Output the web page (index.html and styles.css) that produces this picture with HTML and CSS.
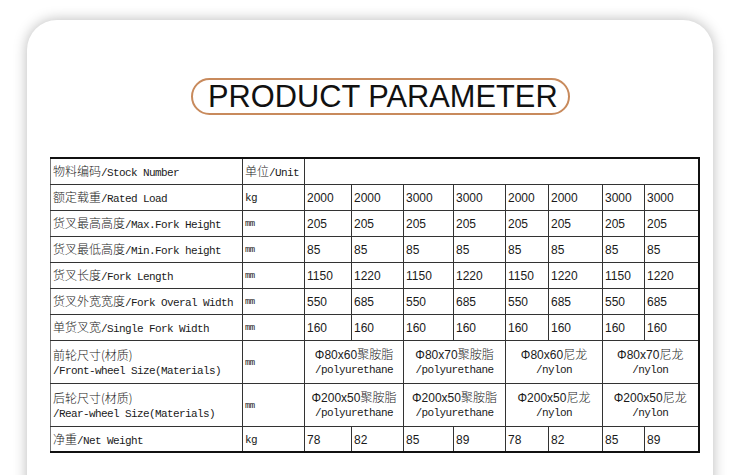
FILE: index.html
```html
<!DOCTYPE html>
<html lang="zh">
<head>
<meta charset="utf-8">
<title>Product Parameter</title>
<link rel="stylesheet" href="styles.css">
</head>
<body>
<div class="card">
  <div class="title-row">
    <h1 class="pill">PRODUCT PARAMETER</h1>
  </div>
  <table class="spec">
    <colgroup>
      <col class="c-label"><col class="c-unit">
      <col class="c-a"><col class="c-b"><col class="c-c"><col class="c-d">
      <col class="c-e"><col class="c-f"><col class="c-g"><col class="c-h">
    </colgroup>
    <tr class="r">
      <td class="lb"><span class="zh">物料编码</span>/Stock Number</td>
      <td class="lb"><span class="zh">单位</span>/Unit</td>
      <td colspan="8"></td>
    </tr>
    <tr class="r">
      <td class="lb"><span class="zh">额定载重</span>/Rated Load</td>
      <td class="u">kg</td>
      <td class="n">2000</td><td class="n">2000</td><td class="n">3000</td><td class="n">3000</td>
      <td class="n">2000</td><td class="n">2000</td><td class="n">3000</td><td class="n">3000</td>
    </tr>
    <tr class="r">
      <td class="lb"><span class="zh">货叉最高高度</span>/Max.Fork Height</td>
      <td class="u mm">mm</td>
      <td class="n">205</td><td class="n">205</td><td class="n">205</td><td class="n">205</td>
      <td class="n">205</td><td class="n">205</td><td class="n">205</td><td class="n">205</td>
    </tr>
    <tr class="r">
      <td class="lb"><span class="zh">货叉最低高度</span>/Min.Fork height</td>
      <td class="u mm">mm</td>
      <td class="n">85</td><td class="n">85</td><td class="n">85</td><td class="n">85</td>
      <td class="n">85</td><td class="n">85</td><td class="n">85</td><td class="n">85</td>
    </tr>
    <tr class="r">
      <td class="lb"><span class="zh">货叉长度</span>/Fork Length</td>
      <td class="u mm">mm</td>
      <td class="n">1150</td><td class="n">1220</td><td class="n">1150</td><td class="n">1220</td>
      <td class="n">1150</td><td class="n">1220</td><td class="n">1150</td><td class="n">1220</td>
    </tr>
    <tr class="r">
      <td class="lb"><span class="zh">货叉外宽宽度</span>/Fork Overal Width</td>
      <td class="u mm">mm</td>
      <td class="n">550</td><td class="n">685</td><td class="n">550</td><td class="n">685</td>
      <td class="n">550</td><td class="n">685</td><td class="n">550</td><td class="n">685</td>
    </tr>
    <tr class="r">
      <td class="lb"><span class="zh">单货叉宽</span>/Single Fork Width</td>
      <td class="u mm">mm</td>
      <td class="n">160</td><td class="n">160</td><td class="n">160</td><td class="n">160</td>
      <td class="n">160</td><td class="n">160</td><td class="n">160</td><td class="n">160</td>
    </tr>
    <tr class="r2">
      <td class="lb"><span class="zh">前轮尺寸(材质)</span><br>/Front-wheel Size(Materials)</td>
      <td class="u mm">mm</td>
      <td class="w" colspan="2"><span class="phi">Φ80x60</span><span class="zh">聚胺脂</span><br>/polyurethane</td>
      <td class="w" colspan="2"><span class="phi">Φ80x70</span><span class="zh">聚胺脂</span><br>/polyurethane</td>
      <td class="w" colspan="2"><span class="phi">Φ80x60</span><span class="zh">尼龙</span><br>/nylon</td>
      <td class="w" colspan="2"><span class="phi">Φ80x70</span><span class="zh">尼龙</span><br>/nylon</td>
    </tr>
    <tr class="r2">
      <td class="lb"><span class="zh">后轮尺寸(材质)</span><br>/Rear-wheel Size(Materials)</td>
      <td class="u mm">mm</td>
      <td class="w" colspan="2"><span class="phi">Φ200x50</span><span class="zh">聚胺脂</span><br>/polyurethane</td>
      <td class="w" colspan="2"><span class="phi">Φ200x50</span><span class="zh">聚胺脂</span><br>/polyurethane</td>
      <td class="w" colspan="2"><span class="phi">Φ200x50</span><span class="zh">尼龙</span><br>/nylon</td>
      <td class="w" colspan="2"><span class="phi">Φ200x50</span><span class="zh">尼龙</span><br>/nylon</td>
    </tr>
    <tr class="r last">
      <td class="lb"><span class="zh">净重</span>/Net Weight</td>
      <td class="u">kg</td>
      <td class="n">78</td><td class="n">82</td><td class="n">85</td><td class="n">89</td>
      <td class="n">78</td><td class="n">82</td><td class="n">85</td><td class="n">89</td>
    </tr>
  </table>
</div>
</body>
</html>
```
FILE: styles.css
```css
html, body {
  margin: 0;
  padding: 0;
  background: #fff;
  overflow: hidden;
}

.card {
  margin: 20px 0 0 27px;
  width: 686px;
  height: 520px;
  background: #fff;
  border-radius: 30px;
  box-shadow: 0 0 14px rgba(0, 0, 0, 0.28);
  padding-top: 58px;
  box-sizing: border-box;
}

.title-row {
  display: flex;
  padding-left: 164px;
}

.pill {
  margin: 0;
  font-family: "Liberation Sans", Arial, sans-serif;
  font-weight: normal;
  font-size: 30.8px;
  line-height: 33px;
  color: #111;
  border: 2px solid #c88a5c;
  border-radius: 19px;
  padding: 0 10px 0 15px;
  white-space: nowrap;
}

.spec {
  margin: 42px 0 0 23px;
  border-collapse: collapse;
  table-layout: fixed;
  width: 648px;
  border-top: 2px solid #111;
  border-right: 2px solid #111;
  border-bottom: 2px solid #111;
  border-left: 1px solid #777;
  color: #1a1a1a;
}

.c-label { width: 192px; }
.c-unit { width: 62px; }
.c-a { width: 47px; }
.c-b { width: 52px; }
.c-c { width: 50px; }
.c-d { width: 52px; }
.c-e { width: 43px; }
.c-f { width: 54px; }
.c-g { width: 42px; }
.c-h { width: 54px; }

.spec td {
  border: 1px solid #333;
  padding: 2px 0 0 2px;
  vertical-align: middle;
  white-space: nowrap;
  overflow: hidden;
  line-height: 14px;
  font-family: "Liberation Mono", "Noto Sans CJK SC", monospace;
  font-size: 11px;
  letter-spacing: -0.6px;
}

.spec tr:first-child td { border-top: 2px solid #111; }
.spec tr.last td { border-bottom: 2px solid #111; }
.spec td:first-child { border-left: 1px solid #777; }
.spec td:last-child { border-right: 2px solid #111; }

.r { height: 26px; }
.r2 { height: 43px; }

.zh {
  font-family: "Noto Sans CJK SC", sans-serif;
  font-size: 12px;
  font-weight: 300;
  letter-spacing: 0;
}

.spec td.n {
  font-family: "Liberation Sans", Arial, sans-serif;
  font-size: 12px;
  letter-spacing: 0;
  padding-left: 2px;
}

.spec td.u {
  font-size: 11px;
}

.spec td.mm {
  font-size: 9px;
  letter-spacing: -0.6px;
}

.spec td.w {
  text-align: center;
  padding: 1px 0 0 0;
}

.phi {
  font-family: "Liberation Sans", Arial, sans-serif;
  font-size: 12px;
  letter-spacing: 0;
}
```
